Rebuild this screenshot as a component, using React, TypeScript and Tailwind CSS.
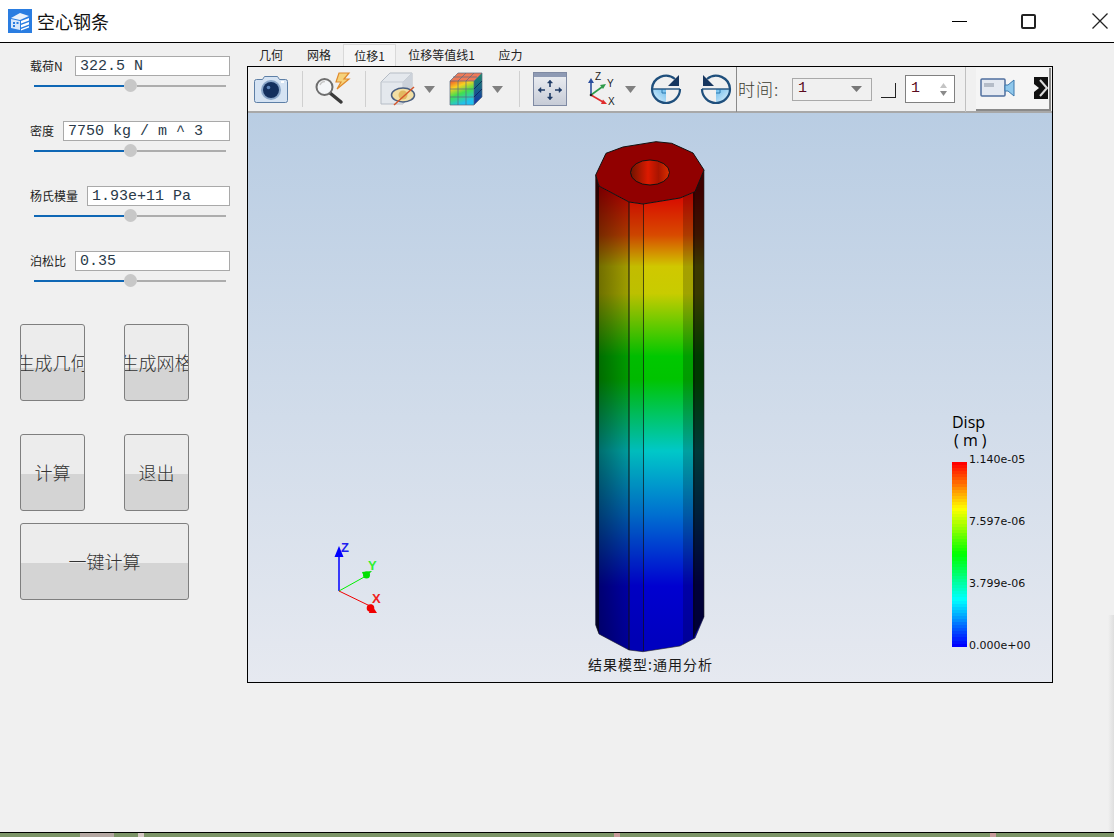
const CJK = `font-['Noto_Sans_CJK_SC',sans-serif]`

const PARAMS = [
  { label: '载荷N', value: '322.5 N', width: 'w-[155px]' },
  { label: '密度', value: '7750 kg / m ^ 3', width: 'w-[167px]' },
  { label: '杨氏模量', value: '1.93e+11 Pa', width: 'w-[143px]' },
  { label: '泊松比', value: '0.35', width: 'w-[155px]' },
]

const TABS = [
  { label: '几何', width: 'w-[48px]' },
  { label: '网格', width: 'w-[48px]' },
  { label: '位移1', width: 'w-[53px]', active: true },
  { label: '位移等值线1', width: 'w-[91px]' },
  { label: '应力', width: 'w-[47px]' },
]

function legendColor(t: number) {
  // t = 0 top (red) ... 1 bottom (blue), rainbow ramp
  const h = t * 240
  return `hsl(${Math.round(h)}, 100%, 50%)`
}

function Slider() {
  return (
    <div className="mt-[3px] ml-[34px] flex w-[192px] items-center">
      <div className="h-[2px] w-[90px] bg-[#0f67b5]" />
      <div className="size-[13px] shrink-0 rounded-full bg-[#c8c8c8]" />
      <div className="h-[2px] flex-1 bg-[#adadad]" />
    </div>
  )
}

function Param({ label, value, width }: { label: string; value: string; width: string }) {
  return (
    <div className="mb-[29px]">
      <div className="ml-[30px] flex w-[200px] items-center justify-between">
        <span className={`${CJK} whitespace-nowrap text-[12px] text-[#222]`}>{label}</span>
        <div className={`${width} flex h-[20px] items-center border border-[#a9a9a9] bg-white pt-[3px] pl-[4px] font-['Liberation_Mono',monospace] text-[15px] whitespace-pre text-[#2a3a4a]`}>
          {value}
        </div>
      </div>
      <Slider />
    </div>
  )
}

function PushButton({ label, width, split }: { label: string; width: string; split: string }) {
  return (
    <div className={`${width} ${split} flex h-[77px] items-center justify-center overflow-hidden rounded-[3px] border border-[#7f7f7f] ${CJK} text-[18px] font-light whitespace-nowrap text-[#333]`}>
      <span className="shrink-0">{label}</span>
    </div>
  )
}

function Sep() {
  return <div className="h-[36px] w-px shrink-0 bg-[#d0d0d0]" />
}

function Caret() {
  return (
    <svg width="11" height="7" viewBox="0 0 11 7" className="shrink-0">
      <path d="M0 0h11L5.5 7z" fill="#808080" />
    </svg>
  )
}

function CameraIcon() {
  return (
    <svg width="34" height="30" viewBox="0 0 34 30" className="shrink-0">
      <path d="M2 5h6l2-3h13l2 3h6a2 2 0 0 1 2 2v19a2 2 0 0 1-2 2H2a2 2 0 0 1-2-2V7a2 2 0 0 1 2-2z" transform="translate(.5 .5)" fill="#d5e3f3" stroke="#5d7fa6" />
      <circle cx="17" cy="16" r="10" fill="#8aa6c8" />
      <circle cx="17" cy="16" r="8" fill="#14305e" />
      <circle cx="14.500" cy="13.500" r="1.800" fill="#5f86ba" />
      <rect x="27" y="7" width="3" height="2" fill="#fff" />
    </svg>
  )
}

function SearchBoltIcon() {
  return (
    <svg width="36" height="34" viewBox="0 0 36 34" className="shrink-0">
      <path d="M15 21l11 9" stroke="#3a3a3a" strokeWidth="3.500" strokeLinecap="round" />
      <circle cx="9.500" cy="15" r="8" fill="#f4f6f8" stroke="#6e6e6e" strokeWidth="2" />
      <path d="M5 13a5.500 5.500 0 0 1 5-3.500" stroke="#c7c7c7" strokeWidth="1.500" fill="none" />
      <path d="M24 1h10l-5 6h5l-12 10 4-7h-5z" fill="#f6d27a" stroke="#e08a2c" strokeWidth="1.200" />
    </svg>
  )
}

function HideCubeIcon() {
  return (
    <svg width="36" height="36" viewBox="0 0 36 36" className="shrink-0">
      <path d="M1 11l9-9h22v22l-9 9H1z" fill="#e4e8ed" stroke="#b5bcc5" />
      <path d="M1 11h22v22M23 11l9-9" fill="none" stroke="#c5cbd3" />
      <path d="M23 11l9-9v22l-9 9z" fill="#ccd2da" />
      <ellipse cx="23" cy="24" rx="11.500" ry="7" fill="#f2dfa4" stroke="#4a5f80" strokeWidth="1.500" />
      <ellipse cx="23" cy="24" rx="4.500" ry="4.500" fill="#e2b860" />
      <path d="M14 34l20-18" stroke="#d4572c" strokeWidth="1.500" />
    </svg>
  )
}

function MeshCubeIcon() {
  return (
    <svg width="34" height="34" viewBox="0 0 34 34" className="shrink-0">
      <defs>
        <linearGradient id="cubeFront" x1="0" y1="0" x2="0.4" y2="1">
          <stop offset="0" stopColor="#f0552c" />
          <stop offset="0.3" stopColor="#f8d020" />
          <stop offset="0.6" stopColor="#40e050" />
          <stop offset="1" stopColor="#20c0f0" />
        </linearGradient>
        <linearGradient id="cubeSide" x1="0" y1="0" x2="0" y2="1">
          <stop offset="0" stopColor="#1d8f6a" />
          <stop offset="1" stopColor="#1230a8" />
        </linearGradient>
      </defs>
      <path d="M1 9h24v24H1z" fill="url(#cubeFront)" />
      <path d="M1 9l8-8h24l-8 8z" fill="#ee7a58" />
      <path d="M25 9l8-8v24l-8 8z" fill="url(#cubeSide)" />
      <path d="M1 9h24v24H1zM1 9l8-8h24l-8 8M33 1v24l-8 8M9 9v24M17 9v24M1 17h24M1 25h24M9 9l8-8M17 9l8-8M4 5h24" stroke="#5a6a80" strokeWidth="0.700" fill="none" />
      <path d="M25 17l8-8M25 25l8-8" stroke="#0a1a50" strokeWidth="0.700" />
    </svg>
  )
}

function FitIcon() {
  return (
    <svg width="34" height="34" viewBox="0 0 34 34" className="shrink-0">
      <defs>
        <linearGradient id="fitBg" x1="0" y1="0" x2="0" y2="1">
          <stop offset="0" stopColor="#eef0f4" />
          <stop offset="1" stopColor="#c6cbd6" />
        </linearGradient>
      </defs>
      <rect x="0.500" y="0.500" width="33" height="33" fill="url(#fitBg)" stroke="#7f8aa3" />
      <rect x="1" y="1" width="32" height="4" fill="#8e9ab4" />
      <g stroke="#1f3b66" strokeWidth="1.600" fill="#1f3b66">
        <path d="M17 10v5M17 21v5M7 18h5M22 18h5" fill="none" />
        <path d="M17 8l-2.500 3h5zM17 28l-2.500-3h5zM5 18l3-2.500v5zM29 18l-3-2.500v5z" strokeWidth="0.500" />
      </g>
    </svg>
  )
}

function AxisIcon() {
  return (
    <svg width="31" height="36" viewBox="0 0 31 36" className="shrink-0">
      <path d="M6 24V10" stroke="#2a4e9e" strokeWidth="1.600" />
      <path d="M6 7l-3 5h6z" fill="#2a4e9e" />
      <path d="M6 24l11-8" stroke="#2e9b4a" strokeWidth="1.600" />
      <path d="M21 13l-6 1 3 4z" fill="#2e9b4a" />
      <path d="M6 24l12 7" stroke="#e02c2c" strokeWidth="1.600" />
      <path d="M22 33l-6 0 2-4.500z" fill="#e02c2c" />
      <circle cx="6" cy="24" r="1.300" fill="#222" />
      <text x="10" y="9" className="font-['Liberation_Sans',sans-serif] text-[10px]" fill="#222">Z</text>
      <text x="22" y="16" className="font-['Liberation_Sans',sans-serif] text-[10px]" fill="#222">Y</text>
      <text x="23" y="34" className="font-['Liberation_Sans',sans-serif] text-[10px]" fill="#222">X</text>
    </svg>
  )
}

function RotateIcon({ flip }: { flip?: boolean }) {
  const id = flip ? 'rotFillB' : 'rotFillA'
  return (
    <svg width="32" height="32" viewBox="0 0 32 32" className={`shrink-0 ${flip ? '-scale-x-100' : ''}`}>
      <defs>
        <linearGradient id={id} x1="1" y1="0" x2="0" y2="1">
          <stop offset="0" stopColor="#6cbcec" />
          <stop offset="1" stopColor="#eaf6fd" />
        </linearGradient>
      </defs>
      <path d="M2 16h14v14A14 14 0 0 1 2 16z" fill={`url(#${id})`} />
      <path d="M25 6A14 14 0 0 0 2 16a14 14 0 0 0 28 0" fill="none" stroke="#1f4f7c" strokeWidth="2.200" />
      <path d="M2 16h28" stroke="#1f4f7c" strokeWidth="1.400" />
      <path d="M12 16v4h4" fill="none" stroke="#1f6fa8" strokeWidth="0.900" />
      <path d="M29 2v11H18z" fill="#17365f" />
    </svg>
  )
}

function ToolBar() {
  return (
    <div className="flex h-[46px] items-center border-b-2 border-[#a8a8a8] bg-[#f0f0f0] pl-[6px]">
      <CameraIcon />
      <div className="ml-[14px]"><Sep /></div>
      <div className="ml-[12px]"><SearchBoltIcon /></div>
      <div className="ml-[14px]"><Sep /></div>
      <div className="ml-[14px]"><HideCubeIcon /></div>
      <div className="ml-[8px]"><Caret /></div>
      <div className="ml-[14px]"><MeshCubeIcon /></div>
      <div className="ml-[9px]"><Caret /></div>
      <div className="ml-[16px]"><Sep /></div>
      <div className="ml-[13px]"><FitIcon /></div>
      <div className="ml-[18px]"><AxisIcon /></div>
      <div className="ml-[9px]"><Caret /></div>
      <div className="ml-[14px]"><RotateIcon /></div>
      <div className="ml-[18px]"><RotateIcon flip /></div>
      <div className="ml-[4px] h-[45px] w-px shrink-0 bg-[#8a8a8a]" />
      <span className={`${CJK} ml-[1px] w-[54px] shrink-0 text-[17px] font-light tracking-[1px] text-[#3c3c30]`}>时间:</span>
      <div className="flex h-[23px] w-[80px] shrink-0 items-center justify-between border border-[#a9a9a9] bg-[#f0f0f0] pr-[9px] pl-[5px] font-['Liberation_Mono',monospace] text-[15px] text-[#5a0a20]">
        1
        <svg width="11" height="6" viewBox="0 0 11 6"><path d="M0 0h11L5.500 6z" fill="#777" /></svg>
      </div>
      <div className="mt-[3px] ml-[9px] size-[15px] shrink-0 border-r border-b border-[#222] bg-[#f0f0f0]" />
      <div className="ml-[9px] flex h-[28px] w-[50px] shrink-0 items-center justify-between border border-[#808080] bg-white pr-[7px] pl-[5px] font-['Liberation_Mono',monospace] text-[15px] text-[#5a0a20]">
        1
        <div className="flex flex-col gap-[3px]">
          <svg width="7" height="5" viewBox="0 0 7 5"><path d="M0 5h7L3.500 0z" fill="#c4c4c4" /></svg>
          <svg width="7" height="5" viewBox="0 0 7 5"><path d="M0 0h7L3.500 5z" fill="#8a8a8a" /></svg>
        </div>
      </div>
      <div className="ml-[10px] h-[45px] w-px shrink-0 bg-[#c0c0c0]" />
      <div className="ml-[10px] flex h-[43px] w-[75px] shrink-0 items-center border-r-2 border-b-2 border-[#8a8a8a] bg-[#f5f5f5] pl-[4px]">
        <svg width="36" height="20" viewBox="0 0 36 20" className="shrink-0">
          <rect x="1" y="1" width="24" height="17" rx="1" fill="#e4e9f1" stroke="#4f6f9e" strokeWidth="1.500" />
          <rect x="4" y="5" width="10" height="4" fill="#b4bcc8" />
          <path d="M25 7h3l6-5v16l-6-5h-3z" fill="#8fc8ec" stroke="#3d78ad" />
        </svg>
        <svg width="14" height="22" viewBox="0 0 14 22" className="ml-[18px] shrink-0">
          <rect width="14" height="22" fill="#111" />
          <path d="M0 7l5 4-5 4z" fill="#f5f5f5" />
          <path d="M6 3l7 8-7 8" fill="none" stroke="#ddd" strokeWidth="2" />
        </svg>
      </div>
    </div>
  )
}

function Tower() {
  const top = '595.7,175 606,153.3 623,147 656,141.7 671.7,143.3 693,153 704,170 695,191.7 680,198 643,204 629,202 599,186'
  return (
    <svg width="804" height="569" viewBox="248 113 804 569" className="block">
      <defs>
        <linearGradient id="disp" gradientUnits="userSpaceOnUse" x1="0" y1="190" x2="0" y2="640">
          <stop offset="0" stopColor="#d80000" />
          <stop offset="0.1" stopColor="#d84a00" />
          <stop offset="0.17" stopColor="#d0c800" />
          <stop offset="0.23" stopColor="#c8cc00" />
          <stop offset="0.37" stopColor="#00c800" />
          <stop offset="0.42" stopColor="#00c400" />
          <stop offset="0.58" stopColor="#00c8c8" />
          <stop offset="0.72" stopColor="#0070d0" />
          <stop offset="0.88" stopColor="#0000d0" />
          <stop offset="1" stopColor="#0000c0" />
        </linearGradient>
        <linearGradient id="hole" x1="0" y1="0" x2="1" y2="0">
          <stop offset="0" stopColor="#6e1400" />
          <stop offset="0.45" stopColor="#dc1a00" />
          <stop offset="0.72" stopColor="#a81400" />
          <stop offset="1" stopColor="#dc3000" />
        </linearGradient>
        <linearGradient id="leftFace" gradientUnits="userSpaceOnUse" x1="599" y1="0" x2="629" y2="0">
          <stop offset="0" stopColor="#000" stopOpacity="0.45" />
          <stop offset="1" stopColor="#000" stopOpacity="0.22" />
        </linearGradient>
      </defs>
      <path d="M595.7 175L599 186 629 202 643 204 680 198 695 191.7 704 170V616.7L695 638 680 646 643 651.7 629 650 599 634 595.7 625z" fill="url(#disp)" />
      <path d="M595.7 175L599 186V634L595.7 625z" fill="#000" opacity="0.8" />
      <path d="M599 186L629 202V650L599 634z" fill="url(#leftFace)" />
      <path d="M629 202L643 204V651.7L629 650z" fill="#000" opacity="0.06" />
      <path d="M683 197L695 191.7V638L683 645z" fill="#000" opacity="0.2" />
      <path d="M693 192L704 170V616.7L693 639z" fill="#000" opacity="0.72" />
      <polygon points={top} fill="#910000" stroke="#111" strokeWidth="1" />
      <ellipse cx="650" cy="172.500" rx="19.500" ry="12.500" fill="url(#hole)" stroke="#111" />
      <path d="M595.7 175V625L599 634 629 650 643 651.7 680 646 695 638 704 616.7V170" fill="none" stroke="#222" strokeWidth="0.600" />
      <path d="M629 202V650" stroke="#111" />
      <path d="M643.5 204V651" stroke="#111" strokeWidth="0.700" />

      {/* triad */}
      <path d="M339 591V554" stroke="#0000ff" strokeWidth="1.500" />
      <path d="M339 546l-4.500 11h9z" fill="#0000ff" />
      <path d="M339 591l27-15" stroke="#00f000" strokeWidth="1" />
      <path d="M362 572l10-1-4 4a4 4 0 0 1-6-3z" fill="#00e000" />
      <circle cx="366.500" cy="575" r="3.500" fill="#00e000" />
      <path d="M339 591l31 15" stroke="#f00000" strokeWidth="1" />
      <circle cx="370.500" cy="608" r="3.800" fill="#f00000" />
      <path d="M371 604l6 9h-8z" fill="#f00000" />
      <text x="341" y="552" fill="#2020f0" className="font-['Liberation_Sans',sans-serif] text-[13px] font-bold">Z</text>
      <text x="368" y="570" fill="#30f030" className="font-['Liberation_Sans',sans-serif] text-[13px] font-bold">Y</text>
      <text x="372" y="603" fill="#f02020" className="font-['Liberation_Sans',sans-serif] text-[13px] font-bold">X</text>
    </svg>
  )
}

function Legend() {
  const ticks = ['1.140e-05', '7.597e-06', '3.799e-06', '0.000e+00']
  return (
    <div className="absolute top-[300px] left-[704px]">
      <div className="font-['Open_Sans',sans-serif] text-[16px] leading-[18px] text-black">Disp</div>
      <div className="pl-[2px] font-['Open_Sans',sans-serif] text-[16px] leading-[18px] whitespace-pre text-black">( m )</div>
      <div className="mt-[13px] flex">
        <div className="flex h-[185px] w-[15px] flex-col">
          {Array.from({ length: 60 }, (_, i) => (
            <div key={i} className="flex-1" style={{ backgroundColor: legendColor(i / 59) }} />
          ))}
        </div>
        <div className="-mt-[10px] ml-[2px] flex h-[202px] flex-col justify-between font-['DejaVu_Sans',sans-serif] text-[11px] leading-[16px] text-[#111]">
          {ticks.map((t) => (
            <span key={t}>{t}</span>
          ))}
        </div>
      </div>
    </div>
  )
}

export default function App() {
  return (
    <div className="relative flex h-[837px] w-[1114px] flex-col overflow-hidden bg-[#7b9467]">
      <div className="flex h-[833px] shrink-0 flex-col border-b border-black bg-[#f0f0f0]">
        {/* title bar */}
        <div className="flex h-[43px] shrink-0 items-center border-b border-black bg-white pl-[8px]">
          <svg width="24" height="24" viewBox="0 0 24 24" className="shrink-0">
            <rect width="24" height="24" fill="#2a7de1" />
            <path d="M3 9l9-5 9 3-9 4z" fill="#fff" opacity="0.9" />
            <path d="M3 10v9l9 2V12z" fill="#d6e6fa" />
            <path d="M13 12l8-3v2.500l-8 3zM13 16l8-3v2.500l-8 3zM13 20l8-3v1.500l-8 3z" fill="#fff" />
            <path d="M5 13h2v2H5zM8.500 13h2v2h-2zM5 16h2v2H5z" fill="#2a7de1" />
          </svg>
          <span className={`${CJK} ml-[5px] text-[18px] text-[#111]`}>空心钢条</span>
          <div className="ml-auto flex h-full items-center pr-[6px]">
            <div className="h-px w-[15px] bg-black" />
            <div className="ml-[54px] size-[15px] rounded-[2px] border-2 border-[#222]" />
            <svg width="16" height="16" viewBox="0 0 16 16" className="ml-[56px]">
              <path d="M.5.5l15 15M15.500.5l-15 15" stroke="#222" strokeWidth="1.300" />
            </svg>
          </div>
        </div>

        <div className="flex flex-1">
          {/* left form */}
          <div className="w-[247px] shrink-0 pt-[13px]">
            {PARAMS.map((p) => (
              <Param key={p.label} {...p} />
            ))}
            <div className="mt-[37px] ml-[20px] flex w-[169px] justify-between">
              <PushButton label="生成几何" width="w-[65px]" split="bg-[linear-gradient(#ececec_0_58%,#d4d4d4_58%)]" />
              <PushButton label="生成网格" width="w-[65px]" split="bg-[linear-gradient(#ececec_0_58%,#d4d4d4_58%)]" />
            </div>
            <div className="mt-[33px] ml-[20px] flex w-[169px] justify-between">
              <PushButton label="计算" width="w-[65px]" split="bg-[linear-gradient(#ececec_0_52%,#d4d4d4_52%)]" />
              <PushButton label="退出" width="w-[65px]" split="bg-[linear-gradient(#ececec_0_52%,#d4d4d4_52%)]" />
            </div>
            <div className="mt-[12px] ml-[20px]">
              <PushButton label="一键计算" width="w-[169px]" split="bg-[linear-gradient(#ececec_0_52%,#d4d4d4_52%)]" />
            </div>
          </div>

          {/* result panel */}
          <div className="w-[806px] shrink-0 pt-[1px]">
            <div className="flex h-[22px] items-end">
              {TABS.map((t) => (
                <div
                  key={t.label}
                  className={`${t.width} ${CJK} flex h-[22px] items-center justify-center text-[12px] text-[#222] ${t.active ? 'border border-b-0 border-[#d9d9d9] bg-[#f5f5f5]' : ''}`}
                >
                  {t.label}
                </div>
              ))}
            </div>
            <div className="h-[617px] border border-black">
              <ToolBar />
              <div className="relative h-[569px] overflow-hidden bg-[linear-gradient(#b9cde3,#e6e9f0)]">
                <Tower />
                <Legend />
                <div className={`${CJK} absolute top-[541px] left-[340px] text-[14px] leading-[20px] tracking-[1px] whitespace-nowrap text-[#1a1a1a]`}>结果模型:通用分析</div>
              </div>
            </div>
          </div>
        </div>
      </div>
      <div className="flex h-[4px] shrink-0">
        <div className="ml-[80px] w-[34px] bg-[#b4a7a2]" />
        <div className="ml-[24px] w-[6px] bg-[#d5c8c4]" />
        <div className="ml-[470px] w-[6px] bg-[#c79a9a]" />
        <div className="ml-[370px] w-[6px] bg-[#c79a9a]" />
      </div>
      {/* soft shadow of the window behind, bottom right */}
      <div className="absolute top-[615px] right-0 h-[217px] w-[6px] bg-[linear-gradient(to_right,transparent,#dedede)]" />
    </div>
  )
}
